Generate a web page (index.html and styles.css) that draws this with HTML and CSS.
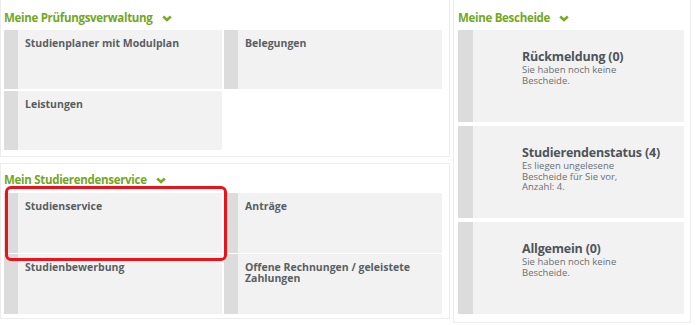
FILE: index.html
```html
<!DOCTYPE html>
<html lang="de">
<head>
<meta charset="utf-8">
<link rel="stylesheet" href="styles.css">
</head>
<body>
<div class="page">
  <div class="col-left">
    <section class="panel panel-top">
      <h2 class="ptitle">Meine Prüfungsverwaltung <svg class="chev" width="10" height="7" viewBox="0 0 10 7"><polyline points="1.2,1.5 5,5 8.8,1.5" fill="none" stroke="#76ad1e" stroke-width="2.6"/></svg></h2>
      <div class="grid">
        <div class="tile"><span class="label">Studienplaner mit Modulplan</span></div>
        <div class="tile"><span class="label">Belegungen</span></div>
        <div class="tile"><span class="label">Leistungen</span></div>
      </div>
    </section>
    <section class="panel panel-bottom">
      <h2 class="ptitle">Mein Studierendenservice <svg class="chev" width="10" height="7" viewBox="0 0 10 7"><polyline points="1.2,1.5 5,5 8.8,1.5" fill="none" stroke="#76ad1e" stroke-width="2.6"/></svg></h2>
      <div class="grid">
        <div class="tile tile-marked"><span class="label">Studienservice</span><span class="mark"></span></div>
        <div class="tile"><span class="label">Anträge</span></div>
        <div class="tile"><span class="label">Studienbewerbung</span></div>
        <div class="tile"><span class="label">Offene Rechnungen / geleistete Zahlungen</span></div>
      </div>
    </section>
  </div>
  <section class="panel panel-right">
    <h2 class="ptitle">Meine Bescheide <svg class="chev" width="10" height="7" viewBox="0 0 10 7"><polyline points="1.2,1.5 5,5 8.8,1.5" fill="none" stroke="#76ad1e" stroke-width="2.6"/></svg></h2>
    <div class="list">
      <div class="btile">
        <div class="btext">
          <div class="btitle">Rückmeldung (0)</div>
          <div class="bsub">Sie haben noch keine<br>Bescheide.</div>
        </div>
      </div>
      <div class="btile">
        <div class="btext">
          <div class="btitle">Studierendenstatus (4)</div>
          <div class="bsub">Es liegen ungelesene<br>Bescheide für Sie vor,<br>Anzahl: 4.</div>
        </div>
      </div>
      <div class="btile">
        <div class="btext">
          <div class="btitle">Allgemein (0)</div>
          <div class="bsub">Sie haben noch keine<br>Bescheide.</div>
        </div>
      </div>
    </div>
  </section>
</div>
</body>
</html>
```
FILE: styles.css
```css
* { box-sizing: border-box; }
html, body { margin: 0; padding: 0; background: #fff; }
body {
  font-family: "Open Sans", "Liberation Sans", sans-serif;
  color: #555a60;
  width: 700px;
  height: 325px;
  overflow: hidden;
}
.page {
  display: flex;
  gap: 3px;
  margin-top: -2px;
}
.col-left {
  width: 450px;
  display: flex;
  flex-direction: column;
  gap: 6px;
}
.panel {
  border: 1px solid #ececec;
  background: #fff;
}
.panel-top {
  height: 159px;
  padding: 0 6px 0 3px;
}
.panel-bottom {
  height: 156px;
  padding: 0 6px 0 3px;
}
.panel-right {
  width: 238px;
  height: 325px;
  padding: 0 6px 0 4px;
}
.ptitle {
  margin: 0;
  height: 31px;
  padding-top: 6px;
  font-size: 11.5px;
  font-weight: 700;
  color: #72a81f;
  letter-spacing: -0.3px;
  display: flex;
  align-items: center;
  line-height: 16px;
}
.ptitle .chev { margin-left: 9px; margin-top: 1px; }
.panel-bottom .ptitle { height: 29px; padding-top: 2px; }
.grid {
  display: grid;
  grid-template-columns: 218px 218px;
  grid-auto-rows: 59px;
  gap: 2px;
}
.panel-bottom .grid { row-gap: 1px; grid-auto-rows: 60px; }
.tile {
  position: relative;
  background: #f2f2f2;
  border-left: 14px solid #dcdcdc;
  padding: 8px 10px 0 7px;
}
.tile-marked { z-index: 2; }
.label {
  display: block;
  font-size: 10.5px;
  font-weight: 700;
  line-height: 11px;
  color: #595e63;
}
.mark {
  position: absolute;
  left: -13px;
  top: -7px;
  width: 222px;
  height: 75px;
  border: 3px solid #e8131b;
  border-radius: 6px;
  z-index: 3;
}
.list {
  display: flex;
  flex-direction: column;
  gap: 4px;
}
.btile {
  height: 92px;
  background: #f2f2f2;
  border-left: 15px solid #dcdcdc;
  padding: 20px 8px 0 49px;
}
.btitle {
  font-size: 12.5px;
  font-weight: 700;
  color: #4f545a;
  line-height: 14px;
  letter-spacing: -0.2px;
}
.bsub {
  font-size: 9.5px;
  color: #6b6f73;
  line-height: 10.5px;
  margin-top: 1px;
}
```
